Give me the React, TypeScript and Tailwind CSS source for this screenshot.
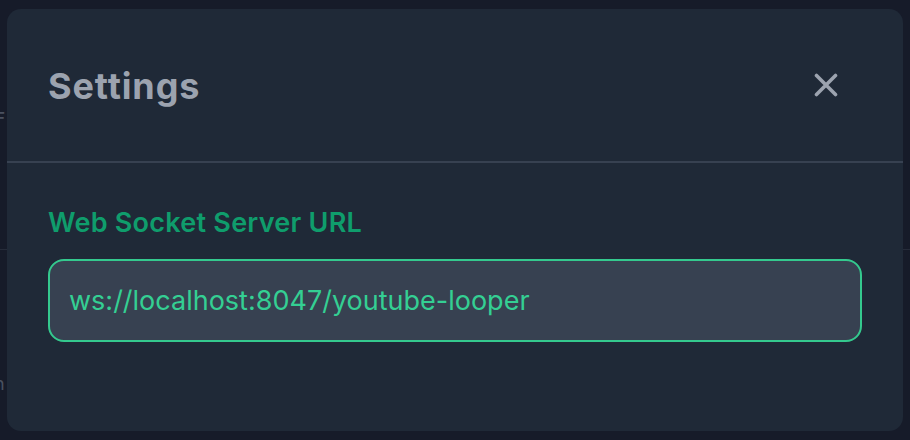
export default function App() {
  return (
    <div
      className="relative w-[910px] h-[440px] overflow-hidden bg-[#161b29]"
      style={{ fontFamily: "Inter, 'Noto Sans', sans-serif" }}
    >
      {/* page underneath the overlay, only its left edge shows */}
      <div className="flex flex-col pt-[110px]">
        <div className="text-[15px] leading-none text-[#4a5160] -ml-[4px] font-bold">F</div>
        <div className="h-px bg-[#262c3a] mt-[124px]" />
        <div className="text-[18px] leading-none text-[#4a5160] mt-[125px] -ml-[6px]">n</div>
      </div>

      {/* settings modal */}
      <div className="absolute left-[7px] top-[9px] w-[896px] h-[422px] rounded-[14px] bg-[#1f2937] flex flex-col">
        <div className="h-[154px] flex items-center justify-between pl-[41px] pr-[53px] border-b-2 border-[#374151]">
          <h2 className="text-[36px] font-bold text-[#9ca3af] tracking-[0.9px] pt-[2px]">Settings</h2>
          <button className="w-12 h-12 flex items-center justify-center text-[#9ca3af]">
            <svg width="24" height="24" viewBox="0 0 24 24" fill="none" stroke="currentColor" strokeWidth="3.6" strokeLinecap="round">
              <path d="M2.5 2.5L21.5 21.5M21.5 2.5L2.5 21.5" />
            </svg>
          </button>
        </div>

        <div className="flex flex-col px-[41px] pt-[42px]">
          <label className="text-[27px] leading-[36px] font-semibold text-[#0f9d6c] tracking-[0.25px]">
            Web Socket Server URL
          </label>
          <input
            className="mt-[18px] h-[83px] w-[814px] rounded-[16px] border-2 border-[#34c98e] bg-[#374151] pl-[19px] text-[27px] text-[#34cf93] outline-none"
            defaultValue="ws://localhost:8047/youtube-looper"
          />
        </div>
      </div>
    </div>
  );
}
